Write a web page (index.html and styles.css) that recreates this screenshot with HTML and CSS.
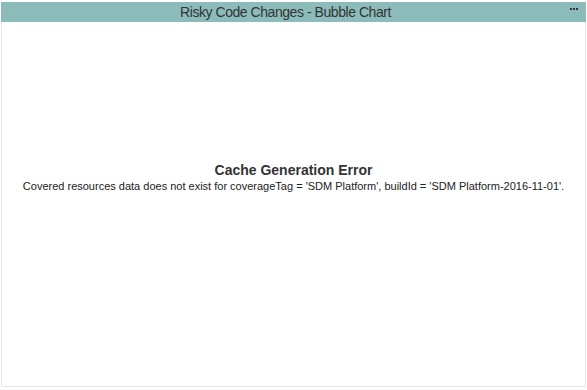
FILE: index.html
```html
<!DOCTYPE html>
<html lang="en">
<head>
    <meta charset="UTF-8">
    <title>Risky Code Changes - Bubble Chart</title>
    <link rel="stylesheet" href="styles.css">
</head>
<body>
    <div class="panel">
        <div class="panel-header">
            <span class="panel-title">Risky Code Changes - Bubble Chart</span>
            <span class="panel-menu"><i></i><i></i><i></i></span>
        </div>
        <div class="panel-body">
            <div class="error">
                <div class="error-title">Cache Generation Error</div>
                <div class="error-msg">Covered resources data does not exist for coverageTag = 'SDM Platform', buildId = 'SDM Platform-2016-11-01'.</div>
            </div>
        </div>
    </div>
</body>
</html>
```

FILE: styles.css
```css
body {
    margin: 0;
    padding: 2px 1px 3px 1px;
    background-color: #fff;
    font-family: 'Liberation Sans', Arial, sans-serif;
    color: #333;
}
.panel {
    height: 385px;
    box-sizing: border-box;
    border: 1px solid #e6e6e6;
    border-top: none;
    display: flex;
    flex-direction: column;
}
.panel-header {
    position: relative;
    height: 20px;
    background-color: #8bbcba;
    text-align: center;
    line-height: 20px;
    margin: 0 -1px;
    padding-right: 16px;
}
.panel-title {
    font-size: 14px;
    letter-spacing: -0.45px;
    color: #333;
}
.panel-menu {
    position: absolute;
    right: 8px;
    top: 6px;
    display: flex;
    gap: 1px;
}
.panel-menu i {
    width: 2px;
    height: 2px;
    background-color: #333;
}
.panel-body {
    flex: 1;
    display: flex;
    align-items: center;
    justify-content: center;
}
.error {
    text-align: center;
    margin-top: -54px;
}
.error-title {
    font-size: 14px;
    font-weight: bold;
    margin-bottom: 2px;
}
.error-msg {
    font-size: 11px;
    color: #222;
}
```
